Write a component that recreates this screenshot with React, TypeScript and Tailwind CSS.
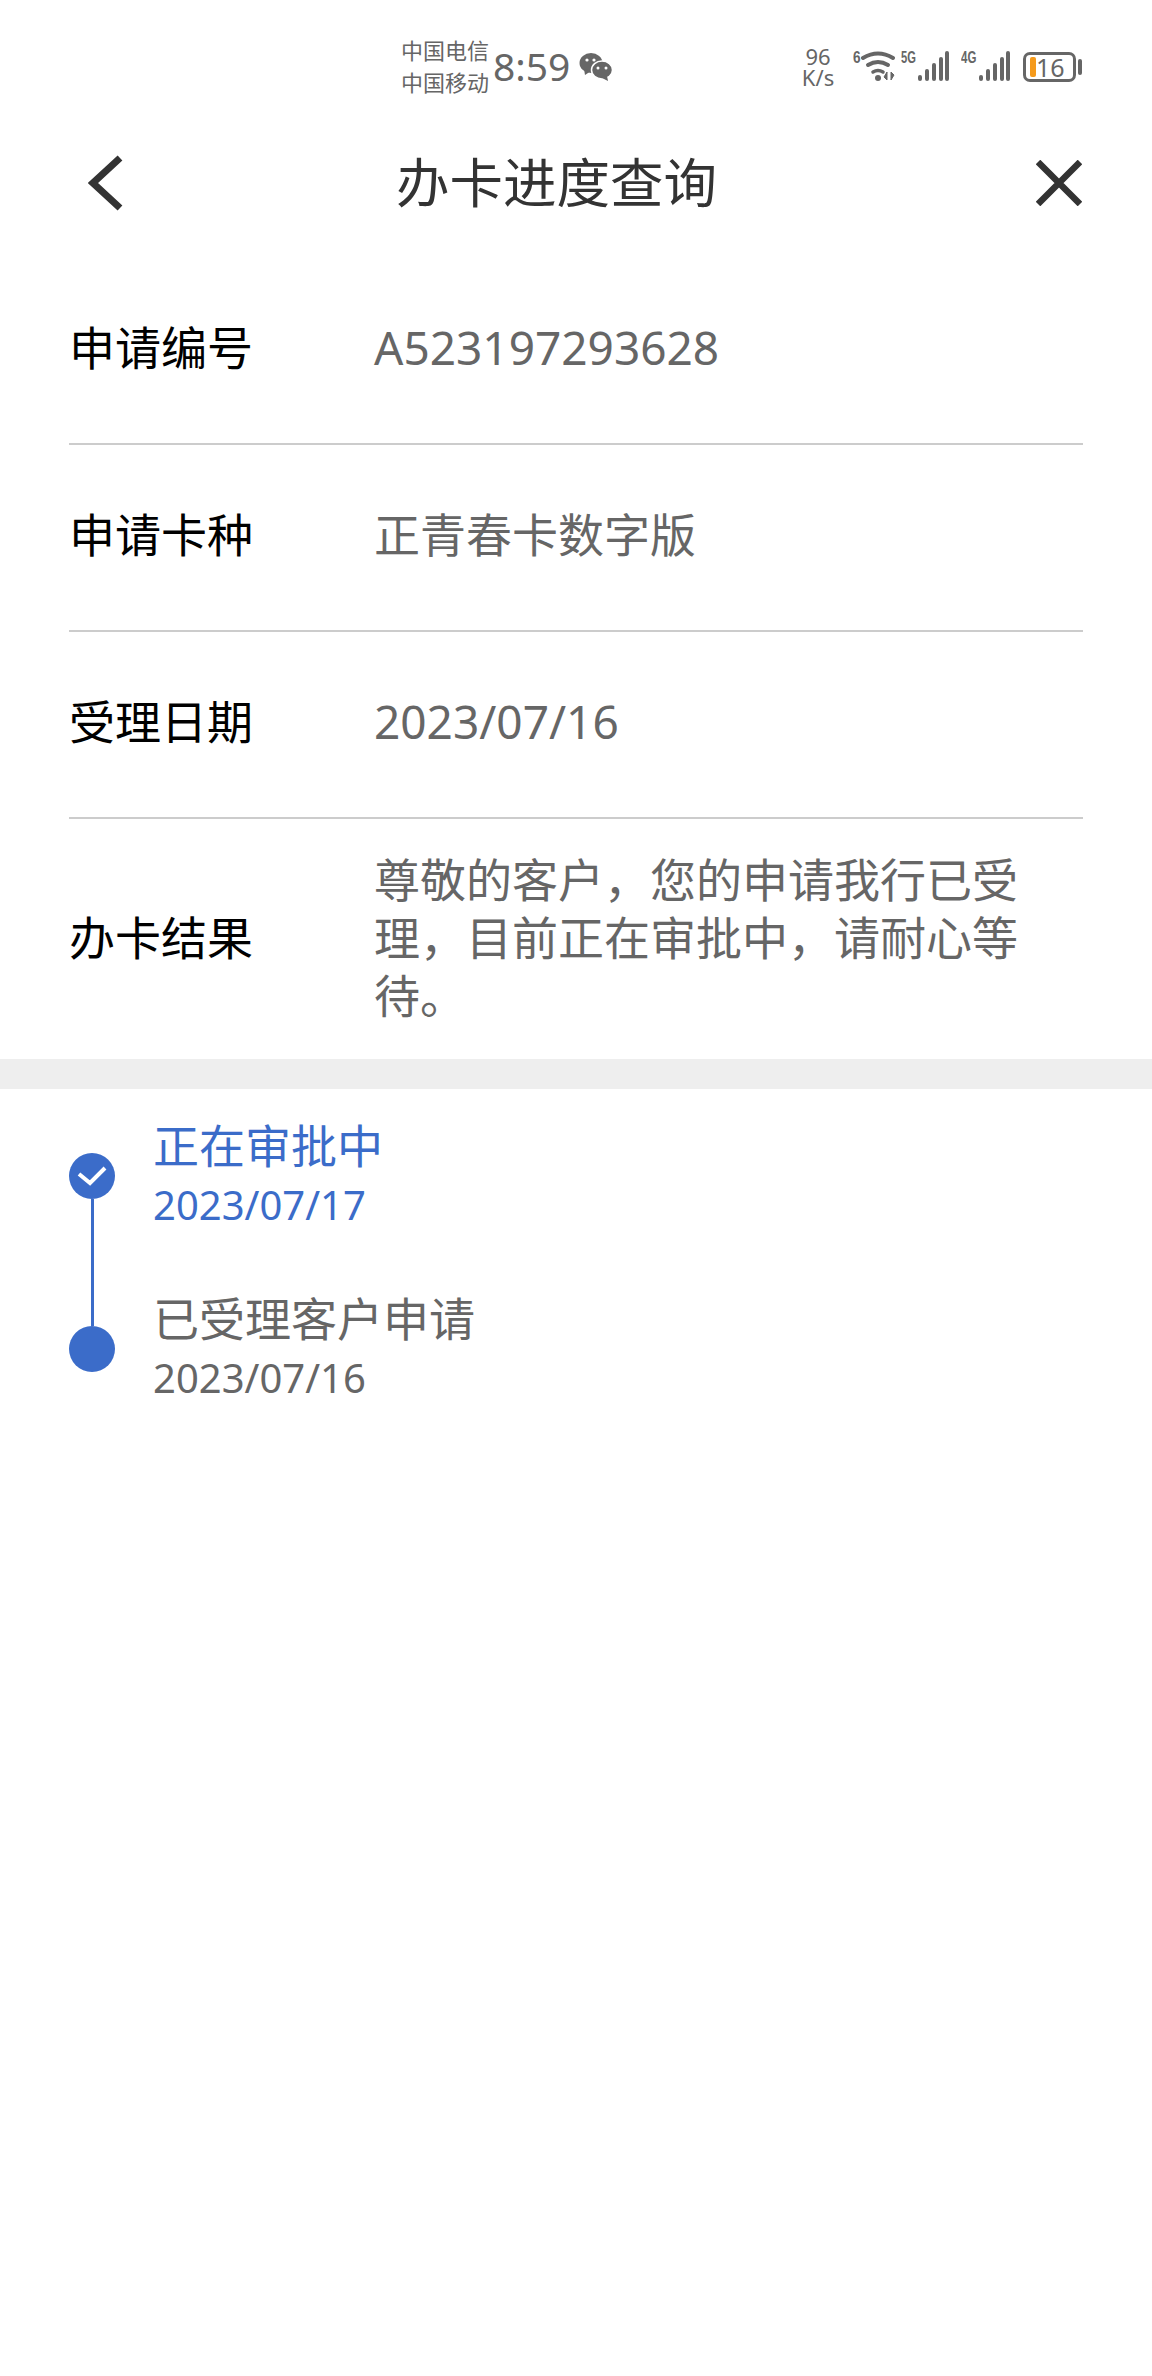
import React from 'react';

const cjk = { fontFamily: '"Noto Sans", "Noto Sans CJK SC", sans-serif' };
const narrow = { fontFamily: '"Liberation Sans", sans-serif' };

const InfoRow = ({ label, value }: { label: string; value: string }) => (
  <div className="flex h-[187px] items-center border-b-2 border-[#cccccc] pb-[8px]">
    <span className="w-[305px] shrink-0 text-[46px] leading-[54px] text-black">{label}</span>
    <span className="text-[46px] leading-[58px] text-[#666666]">{value}</span>
  </div>
);

const Signal = () => (
  <svg width="32" height="32" viewBox="0 0 32 32" className="block">
    <rect x="1" y="25" width="4" height="6" rx="2" fill="#666" />
    <rect x="8" y="19" width="4" height="12" rx="2" fill="#666" />
    <rect x="15" y="13" width="4" height="18" rx="2" fill="#666" />
    <rect x="22" y="7" width="4" height="24" rx="2" fill="#666" />
    <rect x="28" y="1" width="4" height="30" rx="2" fill="#666" />
  </svg>
);

const StatusBar = () => (
  <div className="flex h-[120px] items-start text-[#666666]">
    <div className="ml-[401px] mt-[34px] w-[92px] text-[22px] leading-[32px]">
      <div>中国电信</div>
      <div>中国移动</div>
    </div>
    <div className="mt-[43px] w-[86px] text-[39px] leading-[46px]">8:59</div>
    <svg width="34" height="30" viewBox="0 0 34 30" className="mt-[52px] block">
      <ellipse cx="12" cy="11" rx="11.5" ry="10" fill="#666" />
      <path d="M5 17l1 6 6-4z" fill="#666" />
      <ellipse cx="23" cy="18" rx="10.5" ry="9" fill="#666" stroke="#fff" strokeWidth="1.5" />
      <path d="M28 24l1 5-6-3z" fill="#666" />
      <circle cx="8" cy="8" r="1.6" fill="#fff" />
      <circle cx="15" cy="8" r="1.6" fill="#fff" />
      <circle cx="19" cy="16" r="1.5" fill="#fff" />
      <circle cx="27" cy="16" r="1.5" fill="#fff" />
    </svg>
    <div className="ml-[187px] mt-[46px] w-[36px] text-center text-[22px] leading-[21px]">
      <div>96</div>
      <div>K/s</div>
    </div>
    <div className="ml-[17px] mt-[50px] flex">
      <span className="w-[8px] origin-left scale-x-[.8] text-[17px] font-bold leading-[16px]" style={narrow}>6</span>
      <svg width="36" height="32" viewBox="1 0 36 32" className="block">
        <path d="M3 8q15-9 30 0" fill="none" stroke="#666" strokeWidth="4" strokeLinecap="round" />
        <path d="M8 15q10-6 20 0" fill="none" stroke="#666" strokeWidth="4" strokeLinecap="round" />
        <path d="M13 22q5-3 10 0" fill="none" stroke="#666" strokeWidth="3.5" strokeLinecap="round" />
        <circle cx="18" cy="28" r="3" fill="#666" />
        <path d="M27 30v-8l-3 5zM31 22v8l3-5z" fill="#666" stroke="#666" />
      </svg>
    </div>
    <div className="ml-[4px] mt-[50px] flex">
      <span className="w-[16px] origin-left scale-x-[.7] text-[16px] font-bold leading-[16px]" style={narrow}>5G</span>
      <Signal />
    </div>
    <div className="ml-[12px] mt-[50px] flex">
      <span className="w-[17px] origin-left scale-x-[.72] text-[16px] font-bold leading-[16px]" style={narrow}>4G</span>
      <Signal />
    </div>
    <div className="ml-[13px] mt-[52px] flex items-center">
      <div className="flex h-[30px] w-[53px] items-center rounded-[7px] border-[3px] border-[#666666] pl-[4px]">
        <div className="h-[20px] w-[6px] shrink-0 rounded-[2px] bg-[#f59a1b]" />
        <span className="text-[25px] leading-[24px]">16</span>
      </div>
      <div className="ml-[2px] h-[16px] w-[4px] rounded-full bg-[#666666]" />
    </div>
  </div>
);

const Step = ({ title, date, color, first }: { title: string; date: string; color: string; first?: boolean }) => (
  <div className="flex">
    <div className="flex w-[46px] shrink-0 flex-col items-center">
      {first ? (
        <div className="h-[35px]" />
      ) : (
        <div className="h-[35px] w-[3px] bg-[#3b6cc9]" />
      )}
      <div className="flex h-[46px] w-[46px] items-center justify-center rounded-full bg-[#3b6cc9]">
        {first && (
          <svg width="30" height="20" viewBox="0 0 30 20">
            <path d="M2 8l11 9L28 2" fill="none" stroke="#fff" strokeWidth="4" />
          </svg>
        )}
      </div>
      {first && <div className="w-[3px] flex-1 bg-[#3b6cc9]" />}
    </div>
    <div className={`ml-[38px] ${first ? 'pb-[53px]' : ''}`} style={{ color }}>
      <div className="text-[46px] leading-[54px]">{title}</div>
      <div className="text-[40px] leading-[66px]">{date}</div>
    </div>
  </div>
);

export default function App() {
  return (
    <div className="h-[2376px] w-[1152px] overflow-hidden bg-white" style={cjk}>
      <StatusBar />

      {/* nav */}
      <div className="mt-[31px] flex h-[64px] items-center pl-[88px] pr-[70px]">
        <svg width="36" height="56" viewBox="0 0 36 56" className="block shrink-0">
          <path d="M32 3L5 28l27 25" fill="none" stroke="#333" strokeWidth="7" />
        </svg>
        <h1 className="ml-[272px] text-[53.5px] font-normal leading-[64px] text-[#333333]">办卡进度查询</h1>
        <svg width="46" height="46" viewBox="0 0 46 46" className="ml-auto block shrink-0">
          <path d="M2 2l42 42M44 2L2 44" fill="none" stroke="#333" strokeWidth="6.5" />
        </svg>
      </div>

      <div className="mx-[69px] mt-[43px]">
        <InfoRow label="申请编号" value="A523197293628" />
        <InfoRow label="申请卡种" value="正青春卡数字版" />
        <InfoRow label="受理日期" value="2023/07/16" />
        <div className="flex h-[240px] items-center pb-[4px]">
          <span className="w-[305px] shrink-0 text-[46px] leading-[54px] text-black">办卡结果</span>
          <span className="w-[650px] text-[46px] leading-[58px] text-[#666666]">
            尊敬的客户，您的申请我行已受理，目前正在审批中，请耐心等待。
          </span>
        </div>
      </div>

      <div className="h-[30px] bg-[#eeeeee]" />

      {/* timeline */}
      <div className="pl-[69px] pt-[29px]">
        <Step first title="正在审批中" date="2023/07/17" color="#3b6cc9" />
        <Step title="已受理客户申请" date="2023/07/16" color="#666666" />
      </div>
    </div>
  );
}
